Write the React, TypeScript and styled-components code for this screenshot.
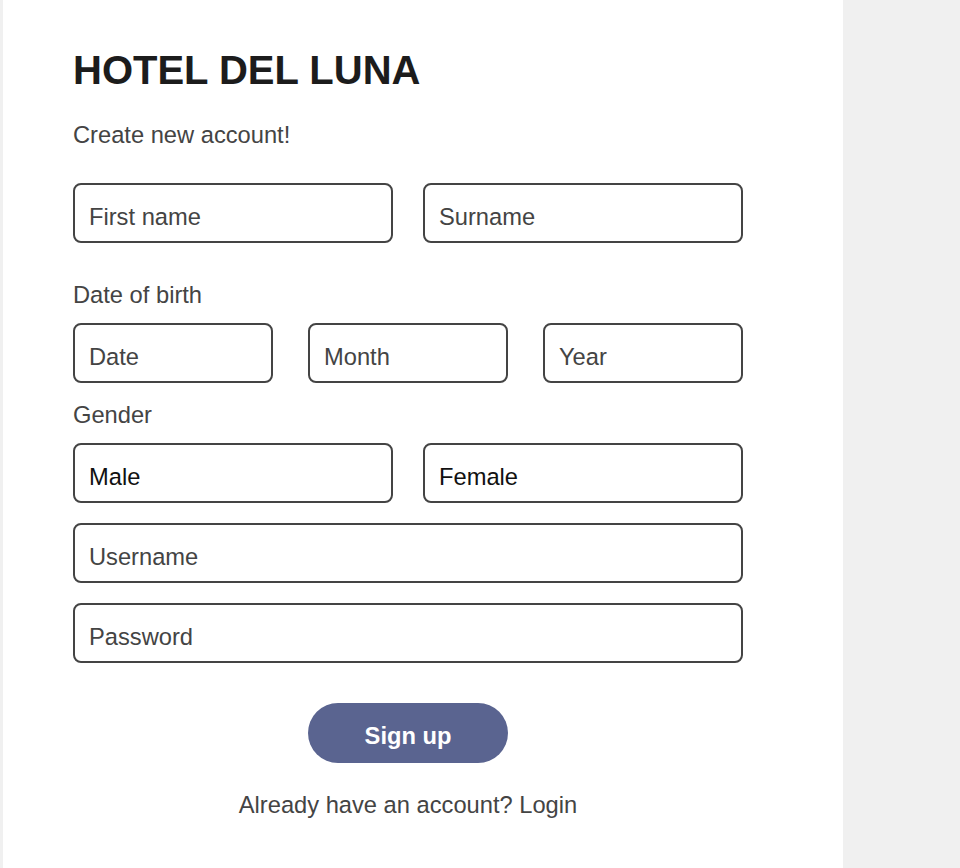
import React from "react";
import styled, { createGlobalStyle } from "styled-components";

const GlobalStyle = createGlobalStyle`
  * {
    box-sizing: border-box;
  }
  body {
    margin: 0;
    background-color: #f0f0f0;
    font-family: "Liberation Sans", Arial, sans-serif;
  }
`;

const Page = styled.div`
  display: flex;
  min-height: 100vh;
`;

const Panel = styled.main`
  width: 840px;
  min-height: 100vh;
  margin-left: 3px;
  background-color: #ffffff;
  padding: 46px 70px 40px;
`;

const Title = styled.h1`
  margin: 0;
  font-size: 40px;
  line-height: 48px;
  font-weight: 700;
  color: #1c1c1c;
`;

const Subtitle = styled.p`
  margin: 27px 0 34px;
  font-size: 23.7px;
  line-height: 28px;
  color: #444444;
`;

const Form = styled.form`
  width: 670px;
  display: flex;
  flex-direction: column;
`;

const Row = styled.div<{ $cols: number; $gap: number; $bottom?: number }>`
  display: grid;
  grid-template-columns: repeat(${(p) => p.$cols}, 1fr);
  column-gap: ${(p) => p.$gap}px;
  margin-bottom: ${(p) => (p.$bottom ?? 20)}px;
`;

const Label = styled.p<{ $top: number }>`
  margin: ${(p) => p.$top}px 0 14px;
  font-size: 23.7px;
  line-height: 28px;
  color: #444444;
`;

const Input = styled.input`
  width: 100%;
  height: 60px;
  border: 2px solid #444444;
  border-radius: 8px;
  padding: 9px 14px 0;
  font-family: inherit;
  font-size: 23.7px;
  color: #1c1c1c;
  background: #ffffff;
  outline: none;

  &::placeholder {
    color: #444444;
    opacity: 1;
  }
`;

const Option = styled.button`
  width: 100%;
  height: 60px;
  border: 2px solid #444444;
  border-radius: 8px;
  padding: 9px 14px 0;
  text-align: left;
  font-family: inherit;
  font-size: 23.7px;
  color: #111111;
  background: #ffffff;
  cursor: pointer;
`;

const Submit = styled.button`
  align-self: center;
  width: 200px;
  height: 60px;
  margin-top: 20px;
  padding: 6px 0 0;
  border: none;
  border-radius: 30px;
  background-color: #5a6490;
  color: #ffffff;
  font-family: inherit;
  font-size: 23.7px;
  font-weight: 700;
  cursor: pointer;
`;

const Footer = styled.p`
  margin: 28px 0 0;
  text-align: center;
  font-size: 23.7px;
  line-height: 28px;
  color: #444444;
`;

const App = () => {
  return (
    <Page>
      <GlobalStyle />
      <Panel>
        <Title>HOTEL DEL LUNA</Title>
        <Subtitle>Create new account!</Subtitle>
        <Form onSubmit={(e) => e.preventDefault()}>
          <Row $cols={2} $gap={30}>
            <Input placeholder="First name" />
            <Input placeholder="Surname" />
          </Row>

          <Label $top={18}>Date of birth</Label>
          <Row $cols={3} $gap={35} $bottom={0}>
            <Input placeholder="Date" />
            <Input placeholder="Month" />
            <Input placeholder="Year" />
          </Row>

          <Label $top={18}>Gender</Label>
          <Row $cols={2} $gap={30}>
            <Option type="button">Male</Option>
            <Option type="button">Female</Option>
          </Row>

          <Row $cols={1} $gap={0}>
            <Input placeholder="Username" />
          </Row>
          <Row $cols={1} $gap={0}>
            <Input type="password" placeholder="Password" />
          </Row>

          <Submit type="submit">Sign up</Submit>
          <Footer>Already have an account? Login</Footer>
        </Form>
      </Panel>
    </Page>
  );
};

export default App;
